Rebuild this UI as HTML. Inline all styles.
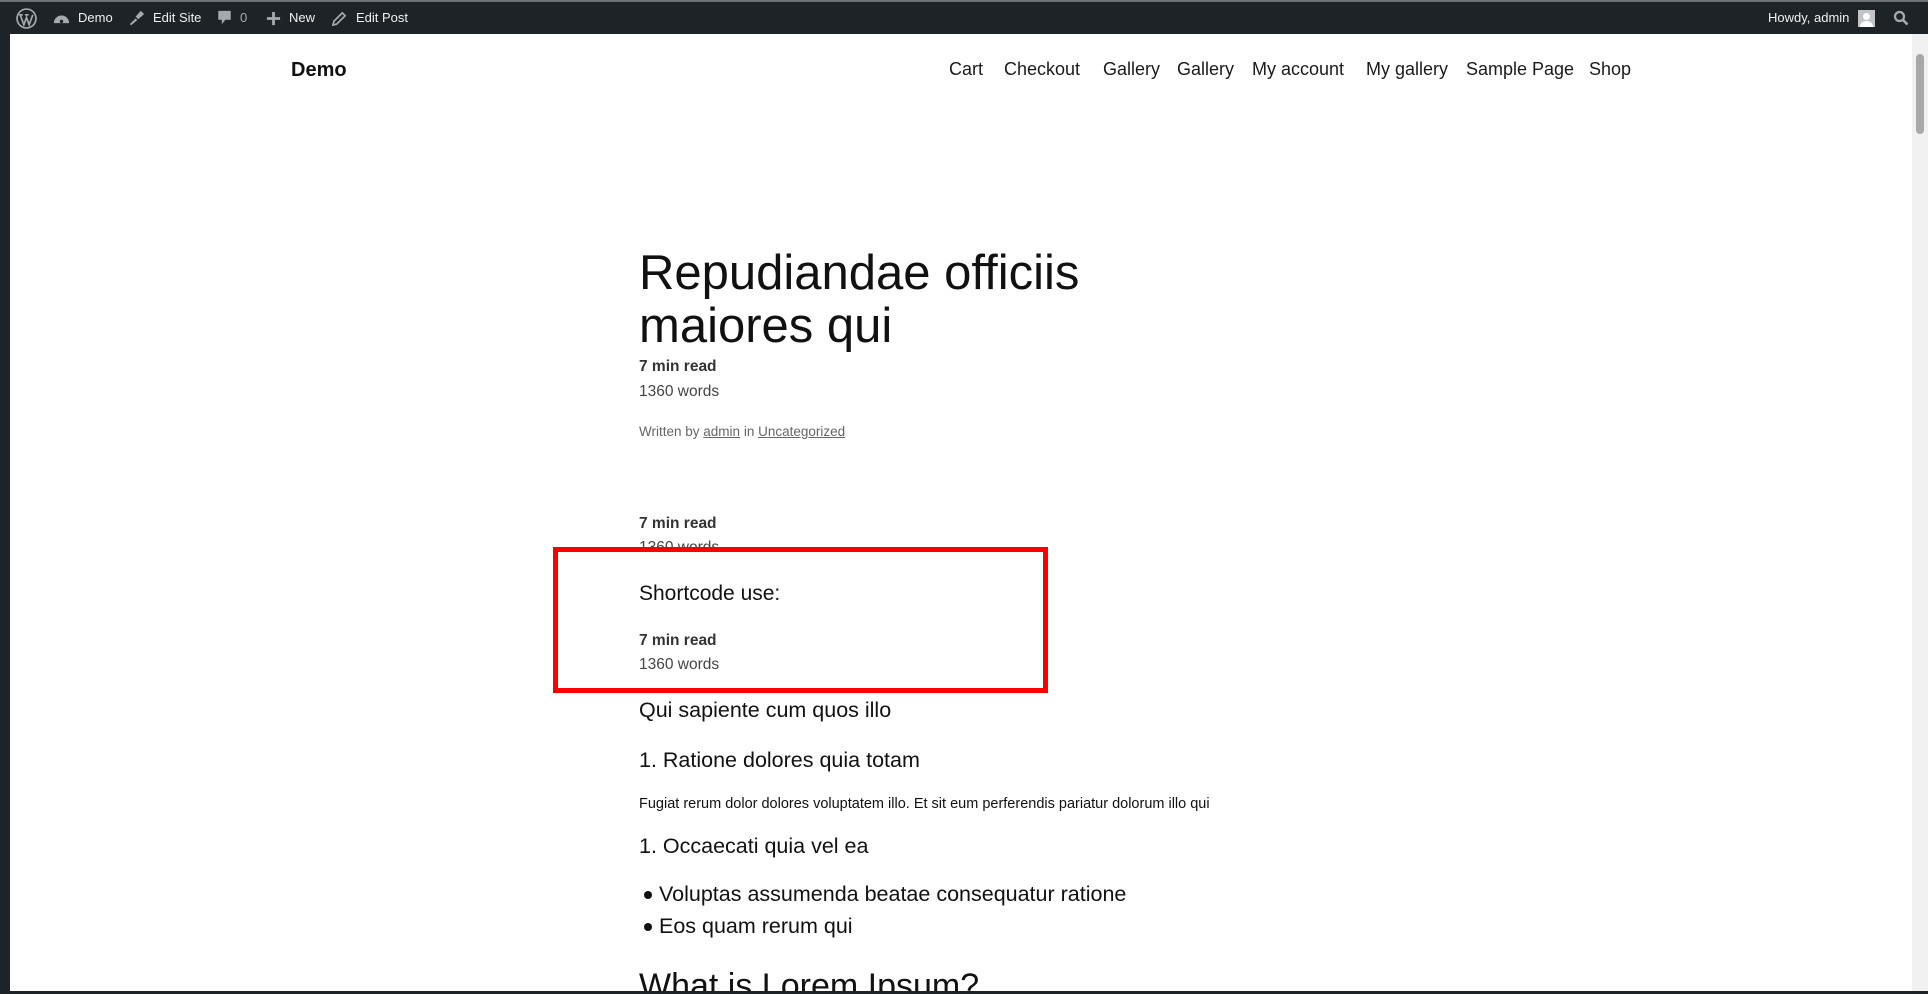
<!DOCTYPE html>
<html><head><meta charset="utf-8"><style>
*{margin:0;padding:0;box-sizing:border-box}
html,body{width:1928px;height:994px;overflow:hidden;background:#fff;font-family:"Liberation Sans",sans-serif;color:#111}
#frame{position:absolute;left:0;top:0;width:1928px;height:994px;background:#1d2327}
#top{position:absolute;left:0;top:0;width:1928px;height:2px;background:#6b7075}
#page{position:absolute;left:10px;top:34px;width:1902px;height:957px;background:#fff;overflow:hidden}
#bar{position:absolute;left:10px;top:2px;width:1918px;height:32px;background:#1d2327;color:#f0f0f1;font-size:13px}
.bi{position:absolute;top:0;height:32px;line-height:32px;white-space:nowrap}
#sb{position:absolute;right:0;top:34px;width:16px;height:957px;background:#f1f1f1}
#sb div{position:absolute;left:4px;top:20px;width:8px;height:80px;background:#a8a8a8;border-radius:4px}
.a{position:absolute;white-space:nowrap}
.t{left:629px}
.nav{position:absolute;top:25px;font-size:18px;color:#1a1a1a}
.meta-b{font-weight:bold;font-size:15.5px;color:#333}
.meta{font-size:15.5px;color:#444}
</style></head><body>
<div id="frame"></div><div id="top"></div>
<div id="bar">
 <div class="bi" style="left:6px"><svg width="21" height="21" viewBox="0 0 20 20" style="margin-top:6px"><circle cx="10" cy="10" r="9" fill="none" stroke="#a7aaad" stroke-width="1.6"/><path d="M4 6.5 L7.5 16 L10 9 L12.5 16 L16 6.5 M3 6.5h3.5 M8.5 6.5h3.5" fill="none" stroke="#a7aaad" stroke-width="1.6"/></svg></div>
 <div class="bi" style="left:43px"><svg width="17" height="14" viewBox="0 0 20 16" style="margin-top:9px"><path d="M1 14 A9 9 0 1 1 19 14 Z" fill="#a7aaad"/><circle cx="10" cy="12" r="2" fill="#1d2327"/></svg></div>
 <div class="bi" style="left:68px">Demo</div>
 <div class="bi" style="left:118px"><svg width="17" height="17" viewBox="0 0 20 20" style="margin-top:7px"><path d="M2 18 L9 11 L11 13 L4 19Z M9 9 L15 2 L19 6 L12 12Z" fill="#a7aaad"/></svg></div>
 <div class="bi" style="left:143px">Edit Site</div>
 <div class="bi" style="left:207px"><svg width="15" height="16" viewBox="0 0 16 18" style="margin-top:8px"><path d="M1 1h14v10h-6l-4 5v-5H1Z" fill="#a7aaad"/></svg></div>
 <div class="bi" style="left:230px;color:#a7aaad">0</div>
 <div class="bi" style="left:256px"><svg width="15" height="15" viewBox="0 0 16 16" style="margin-top:9px"><path d="M6.5 1h3v5.5H15v3H9.5V15h-3V9.5H1v-3h5.5Z" fill="#a7aaad"/></svg></div>
 <div class="bi" style="left:279px">New</div>
 <div class="bi" style="left:322px"><svg width="15" height="15" viewBox="0 0 16 16" style="margin-top:9px"><path d="M1 15 L2 11 L11 2 L14 5 L5 14Z" fill="none" stroke="#a7aaad" stroke-width="1.8"/></svg></div>
 <div class="bi" style="left:346px">Edit Post</div>
 <div class="bi" style="left:1758px">Howdy, admin</div>
 <div class="bi" style="left:1848px"><div style="width:17px;height:17px;margin-top:8px;background:#c3c4c7;position:relative;overflow:hidden"><div style="position:absolute;left:5px;top:3px;width:7px;height:7px;border-radius:50%;background:#fff"></div><div style="position:absolute;left:2px;top:11px;width:13px;height:8px;border-radius:6px 6px 0 0;background:#fff"></div></div></div>
 <div class="bi" style="left:1883px"><svg width="16" height="16" viewBox="0 0 16 16" style="margin-top:8px"><circle cx="6.5" cy="6.5" r="4.5" fill="none" stroke="#a7aaad" stroke-width="2.2"/><path d="M10 10 L14.5 14.5" stroke="#a7aaad" stroke-width="2.6"/></svg></div>
</div>
<div id="sb"><div></div></div>
<div id="page">
 <div class="a" style="left:281px;top:25px;font-size:20px;font-weight:bold">Demo</div>
 <div class="nav" style="left:939px">Cart</div>
 <div class="nav" style="left:994px">Checkout</div>
 <div class="nav" style="left:1093px">Gallery</div>
 <div class="nav" style="left:1167px">Gallery</div>
 <div class="nav" style="left:1242px">My account</div>
 <div class="nav" style="left:1356px">My gallery</div>
 <div class="nav" style="left:1456px">Sample Page</div>
 <div class="nav" style="left:1579px">Shop</div>

 <div class="a t" style="top:213px;font-size:49px;line-height:53px;color:#111">Repudiandae officiis<br>maiores qui</div>
 <div class="a t meta-b" style="top:324px">7 min read</div>
 <div class="a t meta" style="top:349px">1360 words</div>
 <div class="a t" style="top:390px;font-size:13.5px;color:#666">Written by <u>admin</u> in <u>Uncategorized</u></div>
 <div class="a t meta-b" style="top:481px">7 min read</div>
 <div class="a t meta" style="top:505px">1360 words</div>
 <div class="a" style="left:543px;top:513px;width:495px;height:146px;border:5px solid #ff0000"></div>
 <div class="a t" style="top:548px;font-size:21px">Shortcode use:</div>
 <div class="a t meta-b" style="top:598px">7 min read</div>
 <div class="a t meta" style="top:622px">1360 words</div>
 <div class="a t" style="top:664px;font-size:21.5px">Qui sapiente cum quos illo</div>
 <div class="a t" style="top:714px;font-size:21.5px">1. Ratione dolores quia totam</div>
 <div class="a t" style="top:762px;font-size:14.5px">Fugiat rerum dolor dolores voluptatem illo. Et sit eum perferendis pariatur dolorum illo qui</div>
 <div class="a t" style="top:800px;font-size:21.5px">1. Occaecati quia vel ea</div>
 <div class="a" style="left:634px;top:857px;width:8px;height:8px;border-radius:50%;background:#111"></div>
 <div class="a" style="left:649px;top:848px;font-size:21.5px">Voluptas assumenda beatae consequatur ratione</div>
 <div class="a" style="left:634px;top:889px;width:8px;height:8px;border-radius:50%;background:#111"></div>
 <div class="a" style="left:649px;top:880px;font-size:21.5px">Eos quam rerum qui</div>
 <div class="a t" style="top:933px;font-size:34px">What is Lorem Ipsum?</div>
</div>
</body></html>
